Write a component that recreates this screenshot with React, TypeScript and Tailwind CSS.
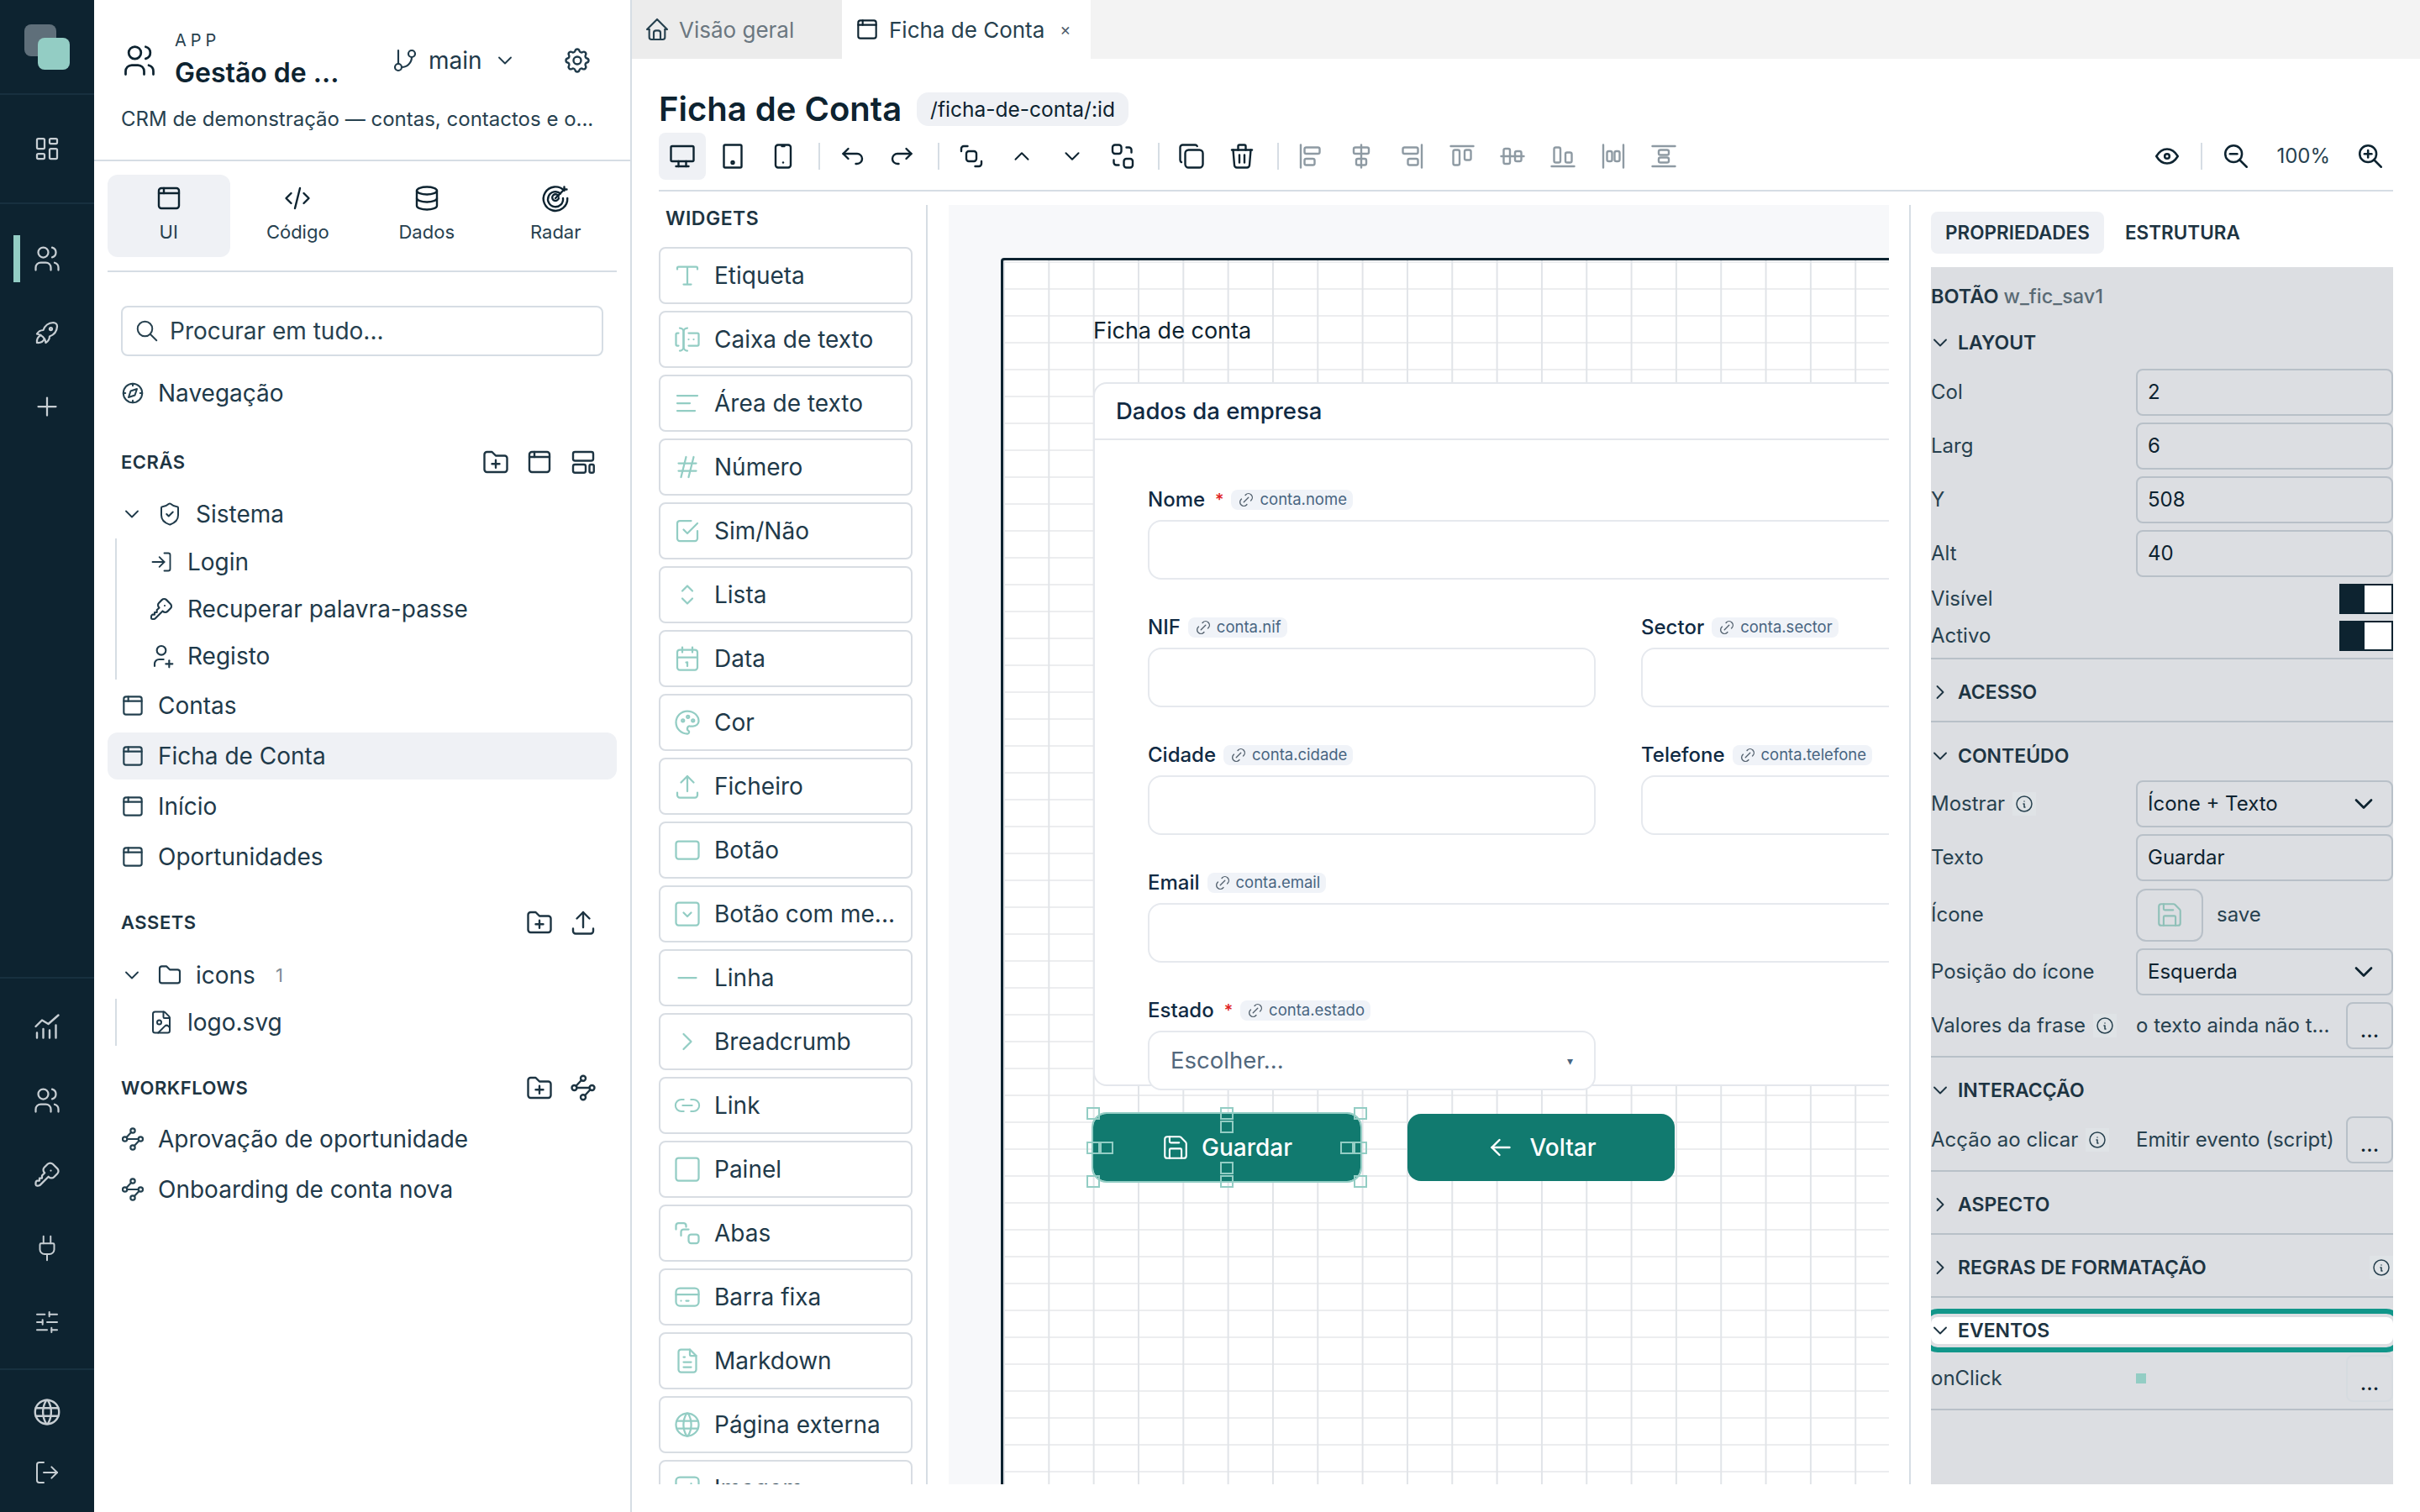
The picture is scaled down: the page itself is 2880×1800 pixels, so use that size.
import type { ReactNode } from 'react'
import {
  TbUsers, TbLayoutDashboard, TbRocket, TbPlus, TbKey, TbWorld,
  TbChevronDown, TbChevronRight, TbChevronUp, TbSettings, TbBrowser, TbCode, TbDatabase,
  TbSearch, TbCompass, TbFolder, TbUpload, TbUserPlus,
  TbHome, TbDeviceDesktop, TbDeviceTablet, TbDeviceMobile, TbArrowBackUp, TbArrowForwardUp, TbCopy, TbTrash,
  TbEye, TbZoomOut, TbZoomIn,
  TbForms, TbAlignLeft, TbHash, TbCheckbox, TbSelector, TbCalendar, TbPalette, TbRectangle,
  TbSquareChevronDown, TbMinus, TbLink, TbSquare, TbCreditCard, TbFileText, TbPhoto, TbArrowLeft, TbInfoCircle,
} from 'react-icons/tb'
import { FileImage, GitBranch, Link2, LogIn, LogOut, Plug, Save, ShieldCheck, SlidersHorizontal } from 'lucide-react'

type IconProps = { size?: number; strokeWidth?: number; className?: string }

const Glyph = ({ size = 36, strokeWidth = 1.6, className, children }: IconProps & { children: ReactNode }) => (
  <svg width={size} height={size} viewBox="0 0 24 24" fill="none" stroke="currentColor" strokeWidth={strokeWidth} strokeLinecap="round" strokeLinejoin="round" className={className}>
    {children}
  </svg>
)

const Workflow = (p: IconProps) => (
  <Glyph size={32} {...p}>
    <circle cx="12" cy="4.5" r="2" />
    <circle cx="5" cy="12" r="2" />
    <circle cx="19" cy="12" r="2" />
    <circle cx="12" cy="19.5" r="2" />
    <path d="M10.6 6 6.4 10.5M7 12h10M17.6 13.5 13.4 18" />
  </Glyph>
)

const FolderAdd = () => (
  <Glyph>
    <path d="M5 4h4l3 3h7a2 2 0 0 1 2 2v9a2 2 0 0 1-2 2H5a2 2 0 0 1-2-2V6a2 2 0 0 1 2-2z" />
    <path d="M12 10.5v6M9 13.5h6" />
  </Glyph>
)

const BoardLayout = () => (
  <Glyph>
    <rect x="4" y="4" width="16" height="7" rx="1.5" />
    <rect x="4" y="14" width="10" height="6.5" rx="1.5" />
    <rect x="17" y="14" width="3.5" height="6.5" rx="1.2" />
  </Glyph>
)

const RadarIcon = () => (
  <Glyph>
    <path d="M19 6A9.5 9.5 0 1 0 21.5 12" />
    <path d="M16 8.3A6 6 0 1 0 18 12" />
    <path d="M14.5 10.5a2.6 2.6 0 1 0 .1 1.5" />
    <path d="M12 12l7-7" />
    <path d="M19 3v2h2" />
  </Glyph>
)

const GrowthChart = () => (
  <Glyph>
    <path d="M4 17v4M9 14v7M14 15v6M19 11v10" />
    <path d="M3 12l5-5 5 3 8-7" />
  </Glyph>
)

const BringForward = (p: IconProps) => (
  <Glyph {...p}>
    <path d="M4 8V6a2 2 0 0 1 2-2h3" />
    <rect x="8" y="8" width="8" height="8" rx="2" />
    <path d="M20 16v2a2 2 0 0 1-2 2h-3" />
  </Glyph>
)

const SendBack = (p: IconProps) => (
  <Glyph {...p}>
    <rect x="4" y="3" width="7" height="7" rx="2" />
    <rect x="13" y="14" width="7" height="7" rx="2" />
    <path d="M15 5h2a2 2 0 0 1 2 2v2M9 19H7a2 2 0 0 1-2-2v-2" />
  </Glyph>
)

const TabsIcon = () => (
  <Glyph strokeWidth={1.5}>
    <path d="M3 9V6a2 2 0 0 1 2-2h4a2 2 0 0 1 2 2v1" />
    <path d="M7 14v-3a2 2 0 0 1 2-2h4" />
    <rect x="13" y="13" width="8" height="7" rx="2" />
  </Glyph>
)

const LabelT = () => (
  <Glyph strokeWidth={1.5}>
    <path d="M4 7V6a1 1 0 0 1 1-1h14a1 1 0 0 1 1 1v1M12 5v14M9 19h6" />
  </Glyph>
)

const AlignIcon = ({ line, a, b }: { line: string; a: number[]; b: number[] }) => (
  <Glyph>
    <path d={line} />
    <rect x={a[0]} y={a[1]} width={a[2]} height={a[3]} rx="1.4" />
    <rect x={b[0]} y={b[1]} width={b[2]} height={b[3]} rx="1.4" />
  </Glyph>
)

const RailIcon = ({ children, active }: { children: ReactNode; active?: boolean }) => (
  <div className="relative flex h-[88px] items-center justify-center text-[#c7ced3]">
    {active && <div className="absolute left-4 top-4 h-14 w-2 bg-[#93cdc4]" />}
    {children}
  </div>
)

const Rail = () => (
  <div className="flex h-full w-[112px] shrink-0 flex-col bg-[#0d2330]">
    <div className="relative h-[113px] border-b-2 border-[#17303f]">
      <div className="absolute left-[29px] top-[29px] h-[38px] w-[38px] rounded-lg bg-[#5f6f7a]" />
      <div className="absolute left-[45px] top-[45px] h-[38px] w-[38px] rounded-lg bg-[#93cdc4]" />
    </div>
    <div className="flex h-[130px] items-center justify-center border-b-2 border-[#17303f] text-[#c7ced3]">
      <TbLayoutDashboard size={36} strokeWidth={1.5} />
    </div>
    <div className="h-[922px] border-b-2 border-[#17303f] pt-[21px]">
      <RailIcon active><TbUsers size={36} strokeWidth={1.5} /></RailIcon>
      <RailIcon><TbRocket size={36} strokeWidth={1.5} /></RailIcon>
      <RailIcon><TbPlus size={36} strokeWidth={1.5} /></RailIcon>
    </div>
    <div className="h-[466px] border-b-2 border-[#17303f] pt-[13px]">
      <RailIcon><GrowthChart /></RailIcon>
      <RailIcon><TbUsers size={36} strokeWidth={1.5} /></RailIcon>
      <RailIcon><TbKey size={36} strokeWidth={1.5} /></RailIcon>
      <RailIcon><Plug size={34} strokeWidth={1.4} /></RailIcon>
      <RailIcon><SlidersHorizontal size={32} strokeWidth={1.5} /></RailIcon>
    </div>
    <div className="pt-[14px]">
      <div className="flex h-[72px] items-center justify-center text-[#c7ced3]"><TbWorld size={38} strokeWidth={1.5} /></div>
      <div className="flex h-[72px] items-center justify-center text-[#c7ced3]"><LogOut size={32} strokeWidth={1.5} /></div>
    </div>
  </div>
)

const ModeTab = ({ icon, label, active }: { icon: ReactNode; label: string; active?: boolean }) => (
  <div className={`flex h-[98px] flex-1 flex-col items-center rounded-xl pt-[10px] text-[#0d2330] ${active ? 'bg-[#eff1f5]' : ''}`}>
    {icon}
    <span className="mt-[6px] text-[22px] leading-8 text-[#27414f]">{label}</span>
  </div>
)

const Heading = ({ label, className, children }: { label: string; className?: string; children: ReactNode }) => (
  <div className={`flex h-10 items-center justify-between pl-4 pr-[22px] text-[#1d3442] ${className ?? ''}`}>
    <span className="text-[22px] font-semibold tracking-[0.5px]">{label}</span>
    <div className="flex items-center gap-4">{children}</div>
  </div>
)

const TreeRow = ({ icon, label, active, className }: { icon: ReactNode; label: string; active?: boolean; className?: string }) => (
  <div className={`flex h-14 items-center gap-[14px] rounded-xl pl-[14px] text-[28px] text-[#1f3a4a] ${active ? 'bg-[#eff1f5]' : ''} ${className ?? ''}`}>
    <span className="flex w-8 justify-center text-[#23404f]">{icon}</span>
    {label}
  </div>
)

const Folder = ({ icon, label, count, className }: { icon: ReactNode; label: string; count?: string; className?: string }) => (
  <div className={`flex h-[58px] items-center pl-[15px] text-[28px] text-[#1f3a4a] ${className ?? ''}`}>
    <TbChevronDown size={28} strokeWidth={1.6} />
    <span className="ml-[15px] mr-[15px] flex w-8 justify-center">{icon}</span>
    {label}
    {count && <span className="ml-6 text-[22px] text-[#7d8c96]">{count}</span>}
  </div>
)

const SubRow = ({ icon, label }: { icon: ReactNode; label: string }) => (
  <div className="flex h-14 items-center gap-[15px] pl-[37px] text-[28px] text-[#1f3a4a]">
    <span className="flex w-8 justify-center">{icon}</span>
    {label}
  </div>
)

const AppPanel = () => (
  <div className="h-full w-[640px] shrink-0 border-r-2 border-[#d6dde4] bg-white">
    <div className="relative h-[192px] border-b-2 border-[#d6dde4] px-8">
      <div className="flex h-[126px] items-center pt-[18px] text-[#0d2330]">
        <TbUsers size={44} strokeWidth={1.5} />
        <div className="ml-[20px] w-[236px]">
          <div className="text-[20px] leading-6 tracking-[5px] text-[#27414f]">APP</div>
          <div className="mt-[5px] text-[32px] font-semibold leading-[44px]">Gestão de ...</div>
        </div>
        <div className="ml-[22px] flex items-center text-[#1f3a4a]">
          <GitBranch size={32} strokeWidth={1.6} />
          <span className="ml-3 text-[28px]">main</span>
          <TbChevronDown size={28} strokeWidth={1.6} className="ml-[13px]" />
        </div>
        <TbSettings size={36} strokeWidth={1.6} className="ml-[54px] text-[#1f3a4a]" />
      </div>
      <div className="whitespace-nowrap text-[24px] leading-8 text-[#27414f]">CRM de demonstração — contas, contactos e o...</div>
    </div>
    <div className="mx-4 flex gap-2 border-b-2 border-[#d6dde4] pb-4 pt-4">
      <ModeTab active icon={<TbBrowser size={36} strokeWidth={1.6} />} label="UI" />
      <ModeTab icon={<TbCode size={36} strokeWidth={1.6} />} label="Código" />
      <ModeTab icon={<TbDatabase size={36} strokeWidth={1.6} />} label="Dados" />
      <ModeTab icon={<RadarIcon />} label="Radar" />
    </div>
    <div className="mx-8 mt-10 flex h-[60px] items-center gap-3 rounded-lg border-2 border-[#d6dde4] pl-[14px] text-[28px] text-[#27414f]">
      <TbSearch size={30} strokeWidth={1.6} />
      Procurar em tudo...
    </div>
    <div className="mx-4 mt-4">
      <TreeRow icon={<TbCompass size={30} strokeWidth={1.6} />} label="Navegação" />
    </div>
    <Heading label="ECRÃS" className="mt-[34px] mx-4">
      <FolderAdd />
      <TbBrowser size={36} strokeWidth={1.6} />
      <BoardLayout />
    </Heading>
    <div className="mx-4 mt-[13px]">
      <Folder icon={<ShieldCheck size={30} strokeWidth={1.6} />} label="Sistema" />
      <div className="ml-[9px] border-l-2 border-[#d6dde4]">
        <SubRow icon={<LogIn size={28} strokeWidth={1.6} />} label="Login" />
        <SubRow icon={<TbKey size={32} strokeWidth={1.6} />} label="Recuperar palavra-passe" />
        <SubRow icon={<TbUserPlus size={32} strokeWidth={1.6} />} label="Registo" />
      </div>
      <div className="mt-[3px] flex flex-col gap-1">
        <TreeRow icon={<TbBrowser size={32} strokeWidth={1.6} />} label="Contas" />
        <TreeRow active icon={<TbBrowser size={32} strokeWidth={1.6} />} label="Ficha de Conta" />
        <TreeRow icon={<TbBrowser size={32} strokeWidth={1.6} />} label="Início" />
        <TreeRow icon={<TbBrowser size={32} strokeWidth={1.6} />} label="Oportunidades" />
      </div>
    </div>
    <Heading label="ASSETS" className="mt-[30px] mx-4">
      <FolderAdd />
      <TbUpload size={36} strokeWidth={1.6} />
    </Heading>
    <div className="mx-4 mt-[15px]">
      <Folder icon={<TbFolder size={32} strokeWidth={1.6} />} label="icons" count="1" className="!h-14" />
      <div className="ml-[9px] border-l-2 border-[#d6dde4]">
        <SubRow icon={<FileImage size={30} strokeWidth={1.6} />} label="logo.svg" />
      </div>
    </div>
    <Heading label="WORKFLOWS" className="mt-[30px] mx-4">
      <FolderAdd />
      <Workflow size={36} />
    </Heading>
    <div className="mx-4 mt-[13px] flex flex-col gap-1">
      <TreeRow icon={<Workflow />} label="Aprovação de oportunidade" />
      <TreeRow icon={<Workflow />} label="Onboarding de conta nova" />
    </div>
  </div>
)

const Tool = ({ children, active, dim }: { children: ReactNode; active?: boolean; dim?: boolean }) => (
  <div className={`mr-1 flex h-14 w-14 shrink-0 items-center justify-center rounded-lg ${active ? 'bg-[#eff1f5]' : ''} ${dim ? 'text-[#8e9aa3]' : 'text-[#0d2330]'}`}>
    {children}
  </div>
)

const Sep = () => <div className="mx-[10px] h-8 w-[2px] shrink-0 bg-[#d6dde4]" />

const Toolbar = () => (
  <div className="mt-2 flex h-14 items-center">
    <Tool active><TbDeviceDesktop size={36} strokeWidth={1.6} /></Tool>
    <Tool><TbDeviceTablet size={36} strokeWidth={1.6} /></Tool>
    <Tool><TbDeviceMobile size={36} strokeWidth={1.6} /></Tool>
    <Sep />
    <Tool><TbArrowBackUp size={36} strokeWidth={1.6} /></Tool>
    <Tool><TbArrowForwardUp size={36} strokeWidth={1.6} /></Tool>
    <Sep />
    <Tool><BringForward /></Tool>
    <Tool><TbChevronUp size={30} strokeWidth={1.6} /></Tool>
    <Tool><TbChevronDown size={30} strokeWidth={1.6} /></Tool>
    <Tool><SendBack /></Tool>
    <Sep />
    <Tool><TbCopy size={36} strokeWidth={1.6} /></Tool>
    <Tool><TbTrash size={36} strokeWidth={1.6} /></Tool>
    <Sep />
    <Tool dim><AlignIcon line="M4 3v18" a={[7, 5, 12, 5]} b={[7, 14, 8, 5]} /></Tool>
    <Tool dim><AlignIcon line="M12 3v18" a={[6, 5, 12, 5]} b={[8, 14, 8, 5]} /></Tool>
    <Tool dim><AlignIcon line="M20 3v18" a={[5, 5, 12, 5]} b={[9, 14, 8, 5]} /></Tool>
    <Tool dim><AlignIcon line="M3 4h18" a={[5, 7, 5, 12]} b={[14, 7, 5, 8]} /></Tool>
    <Tool dim><AlignIcon line="M3 12h18" a={[5, 6, 5, 12]} b={[14, 8, 5, 8]} /></Tool>
    <Tool dim><AlignIcon line="M3 20h18" a={[5, 5, 5, 12]} b={[14, 9, 5, 8]} /></Tool>
    <Tool dim><AlignIcon line="M4 3v18M20 3v18" a={[7, 8, 4, 8]} b={[13, 8, 4, 8]} /></Tool>
    <Tool dim><AlignIcon line="M3 4h18M3 20h18" a={[8, 7, 8, 4]} b={[8, 13, 8, 4]} /></Tool>
    <div className="ml-auto flex items-center">
      <TbEye size={34} strokeWidth={1.8} className="text-[#0d2330]" />
      <div className="mx-[23px] h-8 w-[2px] bg-[#d6dde4]" />
      <TbZoomOut size={34} strokeWidth={1.8} className="text-[#0d2330]" />
      <span className="mx-[31px] text-[24px] text-[#27414f]">100%</span>
      <TbZoomIn size={34} strokeWidth={1.8} className="mr-[10px] text-[#0d2330]" />
    </div>
  </div>
)

const widgets: [ReactNode, string][] = [
  [<LabelT />, 'Etiqueta'],
  [<TbForms size={36} strokeWidth={1.5} />, 'Caixa de texto'],
  [<TbAlignLeft size={36} strokeWidth={1.5} />, 'Área de texto'],
  [<TbHash size={36} strokeWidth={1.5} />, 'Número'],
  [<TbCheckbox size={36} strokeWidth={1.5} />, 'Sim/Não'],
  [<TbSelector size={36} strokeWidth={1.5} />, 'Lista'],
  [<TbCalendar size={36} strokeWidth={1.5} />, 'Data'],
  [<TbPalette size={36} strokeWidth={1.5} />, 'Cor'],
  [<TbUpload size={36} strokeWidth={1.5} />, 'Ficheiro'],
  [<TbRectangle size={36} strokeWidth={1.5} />, 'Botão'],
  [<TbSquareChevronDown size={36} strokeWidth={1.5} />, 'Botão com me...'],
  [<TbMinus size={36} strokeWidth={1.5} />, 'Linha'],
  [<TbChevronRight size={36} strokeWidth={1.5} />, 'Breadcrumb'],
  [<Link2 size={34} strokeWidth={1.4} />, 'Link'],
  [<TbSquare size={36} strokeWidth={1.5} />, 'Painel'],
  [<TabsIcon />, 'Abas'],
  [<TbCreditCard size={36} strokeWidth={1.5} />, 'Barra fixa'],
  [<TbFileText size={36} strokeWidth={1.5} />, 'Markdown'],
  [<TbWorld size={36} strokeWidth={1.5} />, 'Página externa'],
  [<TbPhoto size={36} strokeWidth={1.5} />, 'Imagem'],
]

const WidgetList = () => (
  <div className="h-full w-[302px] shrink-0 overflow-hidden">
    <div className="h-[50px] pl-2 text-[23px] font-semibold leading-8 tracking-[0.5px] text-[#1d3442]">WIDGETS</div>
    <div className="flex flex-col gap-2">
      {widgets.map(([icon, label]) => (
        <div key={label} className="flex h-[68px] shrink-0 items-center rounded-lg border-2 border-[#d8dde3] pl-[14px] text-[28px] text-[#1f3a4a]">
          <span className="flex w-9 justify-center text-[#93cdc4]">{icon}</span>
          <span className="ml-[14px]">{label}</span>
        </div>
      ))}
    </div>
  </div>
)

const Label = ({ text, bind, required }: { text: string; bind: string; required?: boolean }) => (
  <div className="flex h-6 items-center text-[24px] font-medium text-[#102a43]">
    {text}
    {required && <span className="ml-3 text-[20px] text-[#e02020]">*</span>}
    <span className="ml-[9px] flex h-6 items-center gap-[5px] rounded-lg bg-[#f0f3f8] px-[7px] text-[18.5px] font-normal text-[#486581]">
      <TbLink size={22} strokeWidth={1.5} className="text-[#52606d]" />
      {bind}
    </span>
  </div>
)

const Field = ({ text, bind, required, select }: { text: string; bind: string; required?: boolean; select?: boolean }) => (
  <div className="h-[152px] pt-[12px]">
    <Label text={text} bind={bind} required={required} />
    <div className="mt-[12px] flex h-[71px] items-center justify-between rounded-2xl border-2 border-[#e6e9ee] bg-white px-[25px] text-[27.5px] text-[#52687d]">
      {select && (
        <>
          Escolher...
          <span className="text-[14px] text-[#486581]">▾</span>
        </>
      )}
    </div>
  </div>
)

const Handle = ({ className }: { className: string }) => (
  <div className={`absolute h-[15px] w-[16px] border-2 border-[#93cdc4] ${className}`} />
)

const Canvas = () => (
  <div className="ml-[25px] h-full w-[1119px] shrink-0 overflow-hidden bg-[#f7f8fa] pl-[62px] pt-[63px]">
    <div className="h-[1600px] w-[1600px] rounded-tl border-l-[3px] border-t-[3px] border-[#0d2330] bg-white bg-[linear-gradient(to_right,#e1e4e8_1.5px,transparent_1.5px),linear-gradient(to_bottom,#ecedef_2px,transparent_2px)] bg-[size:53.33px_32px] bg-[position:0px_1px] pl-[107px] pt-[66px]">
      <div className="h-9 text-[27px] leading-9 text-[#0d2330]">Ficha de conta</div>
      <div className="mt-[43px] h-[838px] w-[1120px] rounded-2xl border-2 border-[#e4e7ec] bg-white">
        <div className="flex h-[67px] items-center border-b-2 border-[#e4e7ec] pl-[25px] text-[27.5px] font-medium text-[#102a43]">Dados da empresa</div>
        <div className="pl-[63px] pt-[47px]">
          <Field text="Nome" bind="conta.nome" required />
          <div className="grid grid-cols-[533px_533px] gap-x-[54px]">
            <Field text="NIF" bind="conta.nif" />
            <Field text="Sector" bind="conta.sector" />
            <Field text="Cidade" bind="conta.cidade" />
            <Field text="Telefone" bind="conta.telefone" />
          </div>
          <Field text="Email" bind="conta.email" />
          <div className="w-[533px]">
            <Field text="Estado" bind="conta.estado" required select />
          </div>
        </div>
      </div>
      <div className="mt-[33px] flex gap-[56px] text-[28px] font-medium text-white">
        <div className="relative flex h-20 w-[318px] items-center justify-center gap-[14px] rounded-2xl bg-[#117a6f] outline-2 outline-[#93cdc4]">
          <Save size={34} strokeWidth={1.5} />
          Guardar
          <Handle className="-left-2 -top-2" />
          <Handle className="-right-2 -top-2" />
          <Handle className="-left-2 -bottom-2" />
          <Handle className="-right-2 -bottom-2" />
          <Handle className="left-[151px] -top-2" />
          <Handle className="left-[151px] top-[8px]" />
          <Handle className="left-[151px] bottom-[8px]" />
          <Handle className="left-[151px] -bottom-2" />
          <Handle className="-left-2 top-[33px]" />
          <Handle className="left-[8px] top-[33px]" />
          <Handle className="right-[8px] top-[33px]" />
          <Handle className="-right-2 top-[33px]" />
        </div>
        <div className="flex h-20 w-[318px] items-center justify-center gap-[16px] rounded-2xl bg-[#117a6f]">
          <TbArrowLeft size={36} strokeWidth={1.6} />
          Voltar
        </div>
      </div>
    </div>
  </div>
)

const Info = ({ className }: { className?: string }) => (
  <span className={`flex h-7 w-7 items-center justify-center bg-[#dfe3e6] text-[#27414f] ${className ?? ''}`}>
    <TbInfoCircle size={24} strokeWidth={1.5} />
  </span>
)

const Section = ({ title, open = true, info, focus, wide, children }: { title: string; open?: boolean; info?: boolean; focus?: boolean; wide?: boolean; children?: ReactNode }) => (
  <div className={`border-b-2 border-[#b8c0c8] pt-[23px] ${open ? 'pb-2' : 'pb-[18px]'}`}>
    <div className={`flex h-8 items-center text-[23px] font-semibold text-[#1d3442] ${focus ? 'rounded-lg bg-white outline-[6px] outline-offset-4 outline-[#11968a]' : ''}`}>
      <span className="-ml-[3px] w-[35px]">
        {open ? <TbChevronDown size={28} strokeWidth={1.6} /> : <TbChevronRight size={28} strokeWidth={1.6} />}
      </span>
      {title}
      {info && <Info className="ml-auto" />}
    </div>
    {children && <div className={`flex flex-col gap-2 ${wide ? 'mt-[15px]' : 'mt-[13px]'}`}>{children}</div>}
  </div>
)

const Row = ({ label, info, children }: { label: string; info?: boolean; children: ReactNode }) => (
  <div className="grid h-14 grid-cols-[244px_306px] items-center whitespace-nowrap text-[24px] text-[#27414f]">
    <span className="flex items-center gap-[9px]">
      {label}
      {info && <Info />}
    </span>
    {children}
  </div>
)

const Input = ({ value, select }: { value: string; select?: boolean }) => (
  <div className="flex h-14 items-center justify-between rounded-lg border-2 border-[#b8c0c8] pl-3 pr-[15px] text-[24px] text-[#0d2330]">
    {value}
    {select && <TbChevronDown size={36} strokeWidth={1.8} />}
  </div>
)

const Toggle = () => (
  <div className="flex h-9 w-16 border-2 border-[#0d2330] bg-white">
    <div className="h-full w-7 bg-[#0d2330]" />
  </div>
)

const More = ({ faint }: { faint?: boolean }) => (
  <div className={`flex h-14 w-14 shrink-0 items-center justify-center rounded-lg border-2 pt-2 text-[26px] text-[#0d2330] ${faint ? 'border-[#d6dbe0]' : 'border-[#b8c0c8]'}`}>...</div>
)

const Props = () => (
  <div className="ml-[24px] h-full w-[576px] shrink-0 border-l-2 border-[#d6dde4] pl-[24px]">
    <div className="flex h-[74px] items-start pt-2">
      <div className="flex h-[50px] w-[206px] items-center justify-center rounded-lg bg-[#eff1f5] text-[22.5px] font-semibold text-[#1d3442]">PROPRIEDADES</div>
      <div className="ml-[25px] flex h-[50px] items-center text-[22.5px] font-semibold text-[#1d3442]">ESTRUTURA</div>
    </div>
    <div className="h-[1449px] w-[550px] overflow-hidden bg-[#dcdee2]">
      <div className="h-[51px] pt-[19px] text-[23.5px] font-semibold leading-8 text-[#1d3442]">
        BOTÃO <span className="font-medium text-[#5a6b75]">w_fic_sav1</span>
      </div>
      <Section title="LAYOUT" wide>
        <Row label="Col"><Input value="2" /></Row>
        <Row label="Larg"><Input value="6" /></Row>
        <Row label="Y"><Input value="508" /></Row>
        <Row label="Alt"><Input value="40" /></Row>
        <div className="flex h-9 items-center justify-between text-[24px] text-[#27414f]">Visível <Toggle /></div>
        <div className="flex h-9 items-center justify-between text-[24px] text-[#27414f]">Activo <Toggle /></div>
      </Section>
      <Section title="ACESSO" open={false} />
      <div className="pt-px">
        <Section title="CONTEÚDO">
          <Row label="Mostrar" info><Input value="Ícone + Texto" select /></Row>
          <Row label="Texto"><Input value="Guardar" /></Row>
          <div className="grid h-16 grid-cols-[244px_306px] items-center text-[24px] text-[#27414f]">
            <span>Ícone</span>
            <div className="flex items-center">
              <span className="flex h-[63px] w-20 items-center justify-center rounded-xl border-2 border-[#b8c0c8] text-[#8fc0b8]">
                <Save size={34} strokeWidth={1.5} />
              </span>
              <span className="ml-4">save</span>
            </div>
          </div>
          <Row label="Posição do ícone"><Input value="Esquerda" select /></Row>
          <Row label="Valores da frase" info>
            <div className="flex items-center justify-between">
              o texto ainda não t...
              <More />
            </div>
          </Row>
        </Section>
      </div>
      <Section title="INTERACÇÃO" wide>
        <Row label="Acção ao clicar" info>
          <div className="flex items-center justify-between">
            Emitir evento (script)
            <More />
          </div>
        </Row>
      </Section>
      <Section title="ASPECTO" open={false} />
      <Section title="REGRAS DE FORMATAÇÃO" open={false} info />
      <Section title="EVENTOS" focus>
        <Row label="onClick">
          <div className="flex items-center justify-between">
            <div className="h-3 w-3 bg-[#93cdc4]" />
            <More faint />
          </div>
        </Row>
      </Section>
    </div>
  </div>
)

const Main = () => (
  <div className="flex h-full min-w-0 flex-1 flex-col bg-white">
    <div className="flex h-[70px] shrink-0 bg-[#f3f3f3]">
      <div className="flex w-[250px] items-center gap-[10px] bg-[#ececec] pl-[14px] text-[26px] text-[#6b7780]">
        <TbHome size={32} strokeWidth={1.6} className="text-[#27414f]" />
        Visão geral
      </div>
      <div className="flex w-[296px] items-center bg-white pl-[14px] text-[26px] text-[#27414f]">
        <TbBrowser size={32} strokeWidth={1.6} className="text-[#0d2330]" />
        <span className="ml-[10px]">Ficha de Conta</span>
        <span className="ml-[18px] text-[20px] text-[#52606d]">×</span>
      </div>
    </div>
    <div className="mx-8 border-b-2 border-[#d6dde4] pb-3 pt-[40px]">
      <div className="flex h-10 items-center">
        <span className="text-[40px] font-semibold text-[#0d2330]">Ficha de Conta</span>
        <span className="ml-[18px] flex h-10 items-center rounded-[14px] bg-[#eff1f5] px-4 text-[24.5px] text-[#0d2330]">/ficha-de-conta/:id</span>
      </div>
      <Toolbar />
    </div>
    <div className="mt-4 flex h-[1523px] pl-8">
      <WidgetList />
      <div className="ml-4 h-full w-[2px] shrink-0 bg-[#d6dde4]" />
      <Canvas />
      <Props />
    </div>
  </div>
)

export default function App() {
  return (
    <div className="flex h-[1800px] w-[2880px] overflow-hidden bg-white [font-family:Inter,sans-serif]">
      <Rail />
      <AppPanel />
      <Main />
    </div>
  )
}
